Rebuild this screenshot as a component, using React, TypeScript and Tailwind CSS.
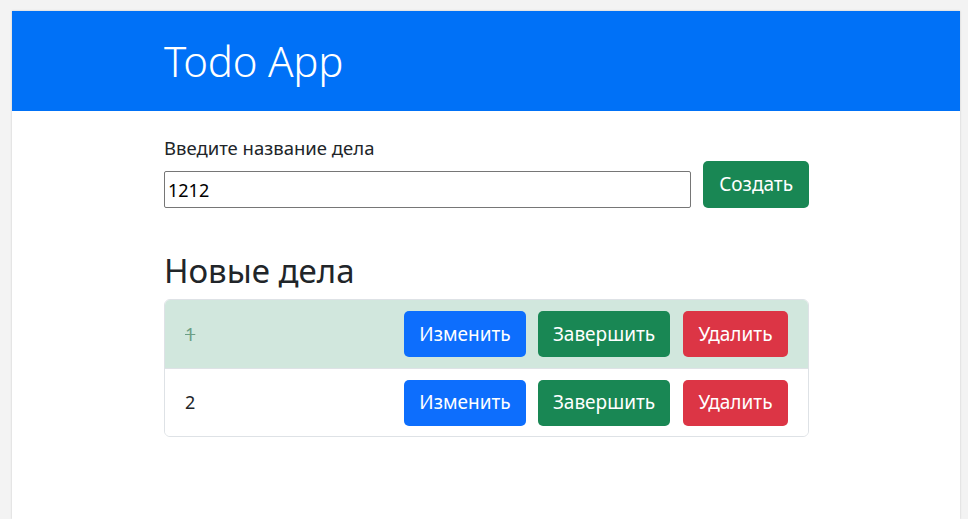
import React, { useState } from 'react'

type Todo = { id: number; title: string; done: boolean }

export default function App() {
  const [value, setValue] = useState('1212')
  const [todos] = useState<Todo[]>([
    { id: 1, title: '1', done: true },
    { id: 2, title: '2', done: false },
  ])

  return (
    <div className="min-h-screen bg-[#f3f3f3] pt-[11px] pl-[12px] pr-[8px]"
      style={{ fontFamily: "'Noto Sans', 'Open Sans', sans-serif" }}>
      <div className="min-h-[508px] bg-white shadow-[0_0_2px_rgba(0,0,0,0.18)]">
        {/* ── Header ── */}
        <header className="h-[100px] bg-[#0071f7] flex items-center">
          <div className="w-[644px] ml-[152px]">
            <h1 className="text-white text-[42px] font-light leading-none tracking-[-0.2px]">Todo App</h1>
          </div>
        </header>

        {/* ── Content ── */}
        <div className="w-[645px] ml-[152px] pt-[24px]">
          <label className="block text-[18.5px] text-[#212529] leading-[26px]">
            Введите название дела
          </label>
          <div className="flex items-end gap-[12px]">
            <input
              value={value}
              onChange={e => setValue(e.target.value)}
              className="w-[528px] h-[37px] border border-[#767676] rounded-[2px] px-[3px] text-[18px] text-black outline-none"
            />
            <button className="h-[47px] px-[16px] bg-[#198754] text-white text-[19px] rounded-[5px]">
              Создать
            </button>
          </div>

          <h2 className="mt-[43px] text-[33px] text-[#212529] leading-[40px] mb-[8px]">Новые дела</h2>

          <ul className="border border-[#dee2e6] rounded-[6px] overflow-hidden">
            {todos.map((t, i) => (
              <li key={t.id}
                className={`h-[68px] flex items-center pl-[20px] pr-[20px] ${i > 0 ? 'border-t' : ''} ${t.done ? 'bg-[#d1e7dd] border-[#b4cfc2]' : 'bg-white border-[#dee2e6]'}`}>
                <span className={`flex-1 text-[18px] ${t.done ? 'line-through text-[#6b9e85]' : 'text-[#212529]'}`}>
                  {t.title}
                </span>
                <div className="flex gap-[12px]">
                  <button className="h-[46px] w-[122px] bg-[#0d6efd] text-white text-[19px] rounded-[5px]">Изменить</button>
                  <button className="h-[46px] w-[132px] bg-[#198754] text-white text-[19px] rounded-[5px]">Завершить</button>
                  <button className="h-[46px] w-[105px] bg-[#dc3545] text-white text-[19px] rounded-[5px] ml-[1px]">Удалить</button>
                </div>
              </li>
            ))}
          </ul>
        </div>
      </div>
    </div>
  )
}
